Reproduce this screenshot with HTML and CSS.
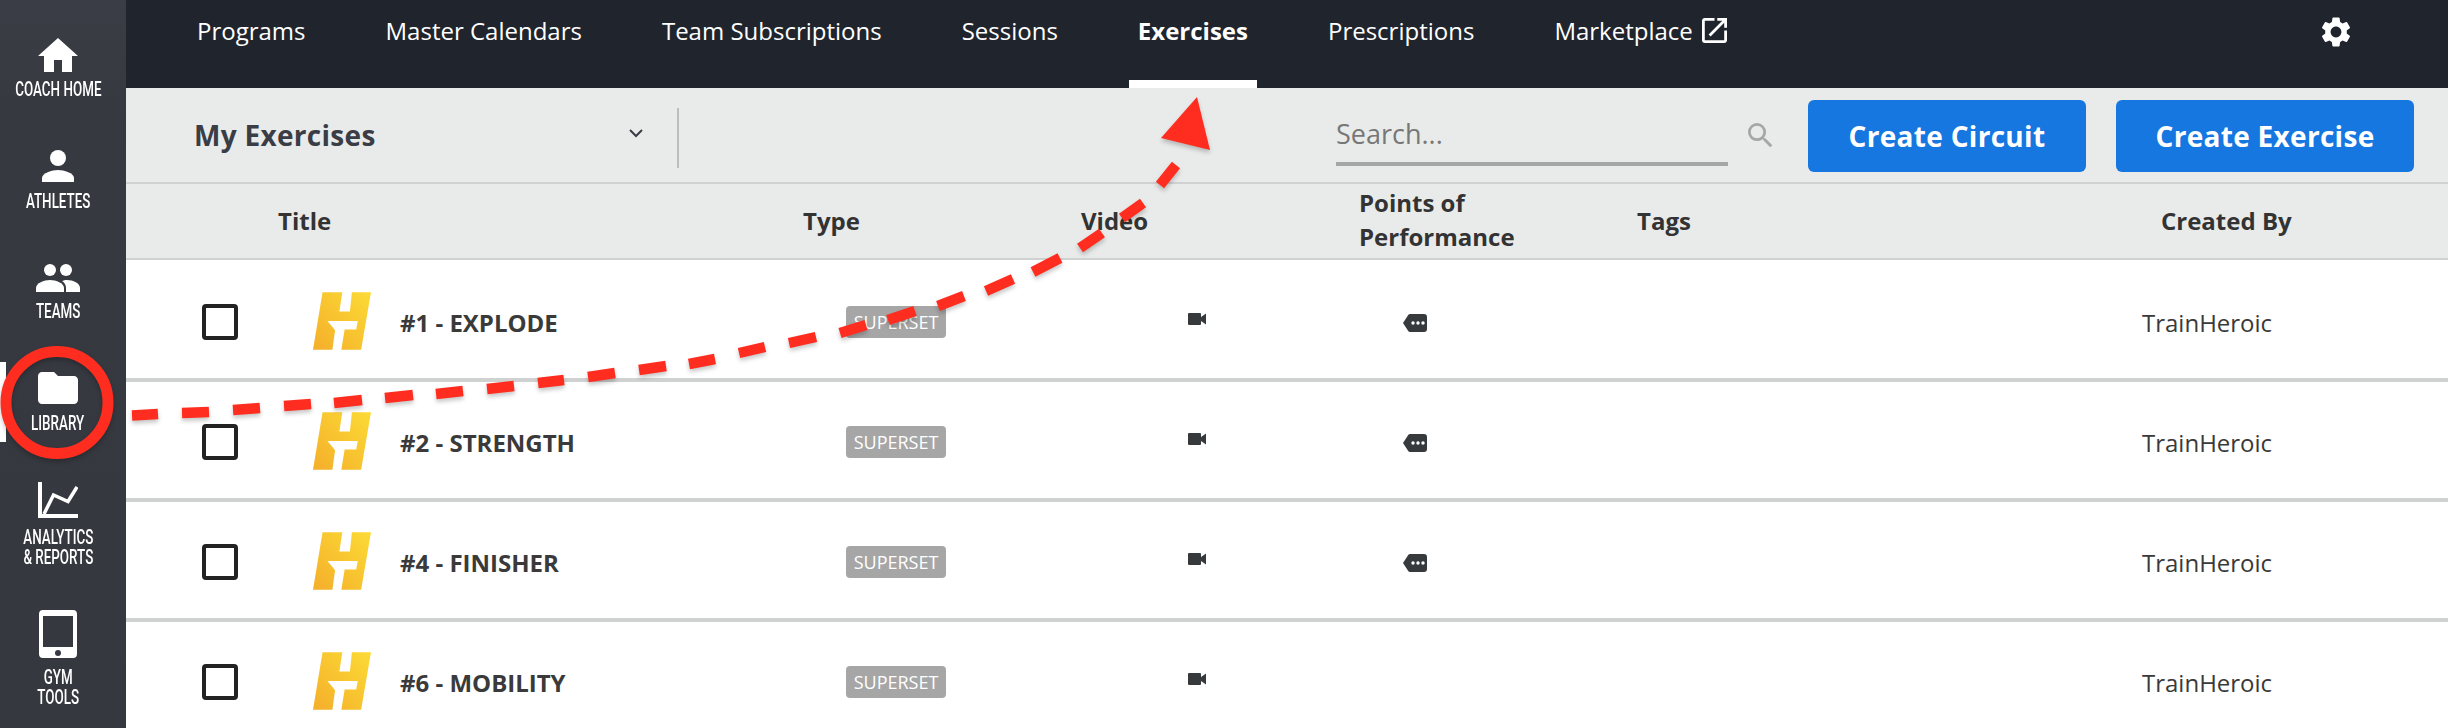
FILE: index.html
```html
<!DOCTYPE html>
<html lang="en">
<head>
<meta charset="utf-8">
<title>Exercises</title>
<link rel="stylesheet" href="styles.css">
</head>
<body>
<div class="app">
  <aside class="sidebar">
    <div class="active-mark"></div>
    <a class="side-item side-home">
      <svg class="ic-home" viewBox="2 3 20 17"><path d="M10 20v-6h4v6h5v-8h3L12 3 2 12h3v8z"/></svg>
      <span class="side-label"><span>COACH HOME</span></span>
    </a>
    <a class="side-item side-athletes">
      <svg class="ic-person" viewBox="42 150 32 32"><circle cx="58" cy="158" r="8"/><path d="M42 182v-4c0-5 10-8 16-8s16 3 16 8v4z"/></svg>
      <span class="side-label"><span>ATHLETES</span></span>
    </a>
    <a class="side-item side-teams">
      <svg class="ic-teams" viewBox="36 264 44 28"><circle cx="50" cy="270" r="6"/><circle cx="66" cy="270" r="6"/><path d="M36 292v-4c0-5 8-8 14-8s14 3 14 8v4z"/><path d="M66 292v-4c0-3-1.500-5.500-4-7 1.500-.5 3-1 5-1 6 0 13 3 13 8v4z"/></svg>
      <span class="side-label"><span>TEAMS</span></span>
    </a>
    <a class="side-item side-library">
      <svg class="ic-folder" viewBox="2 4 20 16"><path d="M10 4H4c-1.100 0-2 .9-2 2v12c0 1.100.9 2 2 2h16c1.100 0 2-.9 2-2V8c0-1.100-.9-2-2-2h-8l-2-2z"/></svg>
      <span class="side-label"><span>LIBRARY</span></span>
    </a>
    <a class="side-item side-analytics">
      <svg class="ic-chart" viewBox="38 482 40 36"><path d="M38 482h4v32h36v4H38z"/><path class="chart-line" d="M44 514l9.500-19 14.500 6.500 9-14.500"/></svg>
      <span class="side-label"><span>ANALYTICS<br>&amp; REPORTS</span></span>
    </a>
    <a class="side-item side-gym">
      <svg class="ic-tablet" viewBox="38 610 38 48"><path fill-rule="evenodd" d="M42 610h30a4 4 0 0 1 4 4v40a4 4 0 0 1-4 4H42a4 4 0 0 1-4-4v-40a4 4 0 0 1 4-4zm0 6v31h30v-31z"/><circle class="tablet-dot" cx="57" cy="653" r="3"/></svg>
      <span class="side-label"><span>GYM<br>TOOLS</span></span>
    </a>
  </aside>

  <main class="main">
    <nav class="topnav">
      <a class="tab">Programs</a>
      <a class="tab">Master Calendars</a>
      <a class="tab">Team Subscriptions</a>
      <a class="tab">Sessions</a>
      <a class="tab tab-active">Exercises</a>
      <a class="tab">Prescriptions</a>
      <a class="tab tab-ext">Marketplace
        <svg class="ic-ext" viewBox="3 3 18 18"><path d="M19 19H5V5h7V3H5c-1.110 0-2 .9-2 2v14c0 1.100.89 2 2 2h14c1.100 0 2-.9 2-2v-7h-2v7zM14 3v2h3.590l-9.830 9.830 1.410 1.410L19 6.410V10h2V3h-7z"/></svg>
      </a>
      <svg class="ic-gear" viewBox="2.500 2 19 20"><path d="M19.140 12.940c.04-.3.06-.61.06-.94 0-.32-.02-.64-.07-.94l2.030-1.580c.18-.14.23-.41.12-.61l-1.920-3.320c-.12-.22-.37-.29-.59-.22l-2.390.96c-.5-.38-1.030-.7-1.620-.94l-.36-2.540c-.04-.24-.24-.41-.48-.41h-3.840c-.24 0-.43.17-.47.41l-.36 2.540c-.59.24-1.130.57-1.620.94l-2.390-.96c-.22-.08-.47 0-.59.22L2.740 8.870c-.12.21-.08.47.12.61l2.030 1.580c-.05.3-.09.63-.09.94s.02.64.07.94l-2.030 1.580c-.18.14-.23.41-.12.61l1.920 3.320c.12.22.37.29.59.22l2.390-.96c.5.38 1.030.7 1.620.94l.36 2.54c.05.24.24.41.48.41h3.840c.24 0 .44-.17.47-.41l.36-2.540c.59-.24 1.130-.56 1.620-.94l2.390.96c.22.08.47 0 .59-.22l1.920-3.320c.12-.22.07-.47-.12-.61l-2.010-1.580zM12 15.600c-1.980 0-3.600-1.620-3.600-3.600s1.620-3.600 3.600-3.600 3.600 1.620 3.600 3.600-1.620 3.600-3.600 3.600z"/></svg>
    </nav>

    <section class="toolbar">
      <div class="picker">
        <span class="picker-name">My Exercises</span>
        <svg class="ic-chevron" viewBox="0 0 14 9"><path d="M1 1l6 6 6-6"/></svg>
      </div>
      <div class="divider"></div>
      <div class="search">
        <div class="search-field">Search...</div>
        <svg class="ic-search" viewBox="3 3 18 18"><path d="M15.500 14h-.79l-.28-.27A6.470 6.470 0 0 0 16 9.500 6.500 6.500 0 1 0 9.500 16c1.610 0 3.090-.59 4.230-1.570l.27.28v.79l5 4.990L20.490 19l-4.990-5zm-6 0C7.010 14 5 11.990 5 9.500S7.010 5 9.500 5 14 7.010 14 9.500 11.990 14 9.500 14z"/></svg>
      </div>
      <button class="btn btn-circuit">Create Circuit</button>
      <button class="btn btn-exercise">Create Exercise</button>
    </section>

    <section class="thead">
      <div>Title</div>
      <div>Type</div>
      <div>Video</div>
      <div class="th-wrap">Points of Performance</div>
      <div>Tags</div>
      <div>Created By</div>
    </section>

    <section class="tbody">
      <svg class="defs" width="0" height="0"><defs>
        <linearGradient id="logo-grad" x1="0" y1="1" x2="1" y2="0"><stop offset="0" stop-color="#f4ae2a"/><stop offset="1" stop-color="#fcdb36"/></linearGradient>
        <symbol id="logo" viewBox="98 73 176 174"><polygon fill="url(#logo-grad)" points="127,73 187,73 178,131 210,131 216,73 274,73 244,247 184,247 194,186 229,186 234,160 142,160 165,188 157,247 98,247"/></symbol>
        <symbol id="video" viewBox="0 0 18 12"><path d="M1 0h11a1 1 0 0 1 1 1v3l5-3.500v11L13 8v3a1 1 0 0 1-1 1H1a1 1 0 0 1-1-1V1a1 1 0 0 1 1-1z"/></symbol>
        <symbol id="tag" viewBox="0 0 24 18"><path fill-rule="evenodd" d="M7 0h14a3 3 0 0 1 3 3v12a3 3 0 0 1-3 3H7a2 2 0 0 1-1.600-.8L0 9l5.400-8.200A2 2 0 0 1 7 0z"/><circle cx="10" cy="9" r="1.700" fill="#fff"/><circle cx="15" cy="9" r="1.700" fill="#fff"/><circle cx="20" cy="9" r="1.700" fill="#fff"/></symbol>
      </defs></svg>

      <div class="row">
        <span class="check"></span>
        <div class="name"><svg class="logo"><use href="#logo"/></svg><span>#1 - EXPLODE</span></div>
        <div><span class="badge">SUPERSET</span></div>
        <div><svg class="ic-video"><use href="#video"/></svg></div>
        <div><svg class="ic-tag"><use href="#tag"/></svg></div>
        <div class="creator">TrainHeroic</div>
      </div>
      <div class="row">
        <span class="check"></span>
        <div class="name"><svg class="logo"><use href="#logo"/></svg><span>#2 - STRENGTH</span></div>
        <div><span class="badge">SUPERSET</span></div>
        <div><svg class="ic-video"><use href="#video"/></svg></div>
        <div><svg class="ic-tag"><use href="#tag"/></svg></div>
        <div class="creator">TrainHeroic</div>
      </div>
      <div class="row">
        <span class="check"></span>
        <div class="name"><svg class="logo"><use href="#logo"/></svg><span>#4 - FINISHER</span></div>
        <div><span class="badge">SUPERSET</span></div>
        <div><svg class="ic-video"><use href="#video"/></svg></div>
        <div><svg class="ic-tag"><use href="#tag"/></svg></div>
        <div class="creator">TrainHeroic</div>
      </div>
      <div class="row">
        <span class="check"></span>
        <div class="name"><svg class="logo"><use href="#logo"/></svg><span>#6 - MOBILITY</span></div>
        <div><span class="badge">SUPERSET</span></div>
        <div><svg class="ic-video"><use href="#video"/></svg></div>
        <div></div>
        <div class="creator">TrainHeroic</div>
      </div>
    </section>
  </main>

  <svg class="annotation" viewBox="0 0 2448 728">
    <circle class="ring" cx="57" cy="402.500" r="51"/>
    <path class="dashes" d="M132 415.500L158 414M182 413L209 412M233 410L260 408M284 406L311 404M334 403L362 400M385 398L413 395M436 394L463 391M487 389L514 386M538 383L564 380M588 377L615 373M639 370L666 366M689 364L715 359M739 353L765 347M789 343L816 337M840 333L866 325M888 320L915 311M938 306L964 296M986 291L1013 279M1033 272L1060 258M1080 248L1102 233M1122 218L1143 203M1160 185L1176 165"/>
    <polygon class="arrowhead" points="1197,97 1161,138 1210,150"/>
  </svg>
</div>
</body>
</html>
```
FILE: styles.css
```css
* { box-sizing: border-box; }
html, body { margin: 0; padding: 0; height: 728px; overflow: hidden; background: #fff; }
body { font-family: "Open Sans", sans-serif; color: #333; }

.app { position: relative; display: flex; width: 2448px; height: 728px; overflow: hidden; }

/* sidebar */
.sidebar { position: relative; flex: 0 0 126px; width: 126px; min-width: 0; height: 728px; padding: 38px 10px 0 0; background: linear-gradient(#3a3d45, #36393f 120px, #35383f); display: flex; flex-direction: column; }
.active-mark { position: absolute; left: 0; top: 362px; width: 6px; height: 80px; background: #fff; }
.side-item { display: flex; flex-direction: column; align-items: center; flex: none; gap: 9px; }
.side-item svg { fill: #fff; display: block; flex: none; }
.side-home { height: 112px; gap: 7px; }
.side-athletes { height: 114px; }
.side-teams { height: 108px; }
.side-library { height: 110px; }
.side-analytics { height: 128px; }
.ic-home { width: 40px; height: 34px; }
.ic-person { width: 32px; height: 32px; }
.ic-teams { width: 44px; height: 28px; }
.ic-folder { width: 40px; height: 32px; }
.ic-chart { width: 40px; height: 36px; }
.ic-tablet { width: 38px; height: 48px; }
.chart-line { fill: none; stroke: #fff; stroke-width: 3.500px; }
.side-item .tablet-dot { fill: #363941; }
.side-label { display: flex; justify-content: center; width: 116px; font-family: "Roboto", "Liberation Sans", sans-serif; font-size: 20px; font-weight: 500; line-height: 20px; color: #fff; text-align: center; white-space: nowrap; }
.side-label span { display: block; flex: none; transform: scaleX(.67); }

/* main */
.main { flex: 1; display: flex; flex-direction: column; min-width: 0; }

.topnav { flex: 0 0 88px; background: #20252d; display: flex; align-items: flex-start; padding-left: 62px; gap: 62px; position: relative; }
.tab { height: 88px; padding: 14px 9px 0; font-size: 24px; line-height: 34px; color: #fff; white-space: nowrap; display: flex; align-items: flex-start; gap: 9px; }
.tab-active { font-weight: 700; border-bottom: 8px solid #fff; }
.ic-ext { width: 25px; height: 25px; fill: #fff; margin-top: 4px; }
.ic-gear { position: absolute; left: 2195px; top: 17px; width: 30px; height: 30px; fill: #fff; }

.toolbar { flex: 0 0 96px; background: #e9ebea; border-bottom: 2px solid #d0d2d1; display: flex; align-items: flex-start; padding-left: 68px; }
.picker { width: 483px; height: 94px; display: flex; align-items: center; justify-content: space-between; padding-right: 34px; }
.picker-name { font-size: 28px; font-weight: 700; letter-spacing: .3px; color: #3a3d45; }
.ic-chevron { width: 14px; height: 9px; fill: none; stroke: #3a3d45; stroke-width: 2; margin-top: -4px; }
.divider { width: 2px; height: 60px; margin-top: 20px; background: #bcbebd; }
.search { width: 472px; margin-left: 657px; height: 94px; display: flex; align-items: flex-start; position: relative; }
.search-field { width: 392px; height: 78px; padding-top: 27px; border-bottom: 4px solid #a6a6a6; font-size: 27px; line-height: 38px; color: #777; }
.ic-search { width: 25px; height: 25px; fill: #a6a6a6; margin: 35px 0 0 20px; }
.btn { height: 72px; margin-top: 12px; border: 0; border-radius: 6px; background: #1677e1; color: #fff; font-family: "Open Sans", sans-serif; font-size: 28px; font-weight: 700; letter-spacing: .3px; padding: 0; }
.btn-circuit { width: 278px; }
.btn-exercise { width: 298px; margin-left: 30px; }

.thead { flex: 0 0 76px; padding: 0 0 2px 152px; background: #e9ebea; border-bottom: 2px solid #d0d2d1; display: grid; grid-template-columns: 525px 278px 278px 278px 524px 1fr; align-items: center; font-size: 24px; font-weight: 700; color: #333; }
.th-wrap { width: 180px; line-height: 34px; }

.tbody { flex: 1; padding-top: 2px; background: #fff; }
.defs { position: absolute; }
.row { height: 120px; border-bottom: 4px solid #d0d2d1; display: grid; grid-template-columns: 111px 533px 342px 215px 739px 1fr; align-items: center; padding: 4px 0 0 76px; }
.check { display: block; width: 36px; height: 36px; border: 4px solid #222; border-radius: 4px; background: #fff; }
.name { display: flex; align-items: center; gap: 29px; font-size: 24px; font-weight: 700; color: #3a3a3a; }
.logo { display: block; width: 58px; height: 58px; margin-top: -2px; }
.badge { display: block; width: 100px; height: 32px; border-radius: 4px; background: #a6a6a6; color: #fff; font-size: 18px; line-height: 32px; text-align: center; }
.ic-video { display: block; width: 18px; height: 12px; margin-top: -6px; fill: #373a3c; }
.ic-tag { display: block; width: 24px; height: 18px; margin-top: 2px; fill: #373a3c; }
.creator { font-size: 24px; color: #3a3a3a; }

/* annotation overlay */
.annotation { position: absolute; left: 0; top: 0; width: 2448px; height: 728px; pointer-events: none; filter: drop-shadow(0 3px 2px rgba(0, 0, 0, .22)); }
.ring { fill: none; stroke: #ff2d1f; stroke-width: 11px; }
.dashes { fill: none; stroke: #ff2d1f; stroke-width: 10.500px; }
.arrowhead { fill: #ff2d1f; }
```
